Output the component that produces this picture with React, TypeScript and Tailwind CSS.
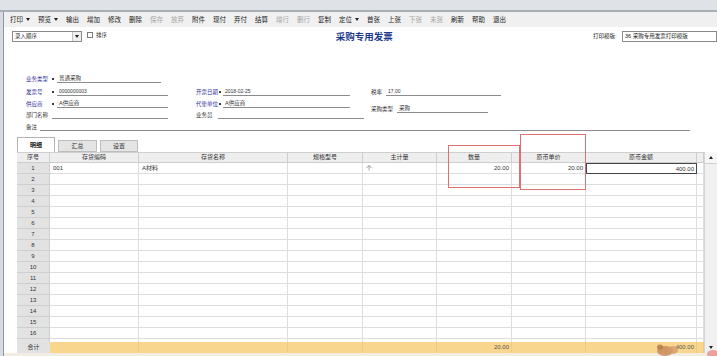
import React from 'react'

const tools: { t: string; off?: boolean; dd?: boolean }[] = [
  { t: '打印', dd: true },
  { t: '预览', dd: true },
  { t: '输出' },
  { t: '增加' },
  { t: '修改' },
  { t: '删除' },
  { t: '保存', off: true },
  { t: '放弃', off: true },
  { t: '附件' },
  { t: '现付' },
  { t: '弃付' },
  { t: '结算' },
  { t: '增行', off: true },
  { t: '删行', off: true },
  { t: '复制' },
  { t: '定位', dd: true },
  { t: '首张' },
  { t: '上张' },
  { t: '下张', off: true },
  { t: '末张', off: true },
  { t: '刷新' },
  { t: '帮助' },
  { t: '退出' },
]

const cols = ['序号', '存货编码', '存货名称', '规格型号', '主计量', '数量', '原币单价', '原币金额', '']
const row1 = ['1', '001', 'A材料', '', '个', '20.00', '20.00', '400.00', '']
const totals = ['合计', '', '', '', '', '20.00', '', '400.00', '']

const gridCols = 'grid grid-cols-[33px_89px_149px_75px_74px_75px_74px_111px_7px]'

function Caret({ up = false }: { up?: boolean }) {
  return (
    <svg width="4" height="3" viewBox="0 0 4 3" className="block">
      <polygon points={up ? '0,3 4,3 2,0' : '0,0 4,0 2,3'} fill="#222" />
    </svg>
  )
}

interface FieldProps {
  label: string
  lw: string
  lineW: string
  value?: string
  req?: boolean
  num?: boolean
  mark?: string
  className?: string
}

function Field({ label, lw, lineW, value = '', req, num, mark, className = '' }: FieldProps) {
  return (
    <div className={`flex items-end h-[9px] ${className}`}>
      <span
        className={`${lw} shrink-0 whitespace-nowrap text-[5.5px] leading-[8px] ${
          req ? 'text-[#34349c]' : 'text-[#333]'
        }`}
      >
        {label}
      </span>
      {mark && (
        <span className={`${mark} shrink-0 h-[8px] flex items-center`}>
          <span className="block w-[2px] h-[2px] bg-[#3a3a3a]" />
        </span>
      )}
      <div
        className={`${lineW} shrink-0 h-[9px] border-b border-[#8c8c8c] pl-[2px] leading-[8px] whitespace-nowrap text-[#333] ${
          num ? 'text-[5px]' : 'text-[5.5px]'
        }`}
      >
        {value}
      </div>
    </div>
  )
}

function Cell({ v, c, focus }: { v: string; c: number; focus?: boolean }) {
  const align = c === 0 ? 'text-center' : c >= 5 && c <= 7 ? 'text-right pr-[2px]' : 'text-left pl-[3px]'
  const bg = c === 0 ? 'bg-[#e2e2e2] border-[#cfcfcf]' : 'border-[#dedede]'
  return (
    <div
      className={`h-[11px] text-[6px] leading-[10px] whitespace-nowrap overflow-hidden text-[#333] ${align} ${
        focus ? 'border border-[#444] bg-white' : `border-r border-b ${bg}`
      }`}
    >
      {v}
    </div>
  )
}

export default function App() {
  return (
    <div className="relative w-[717px] h-[356px] overflow-hidden bg-white font-['Liberation_Sans','Noto_Sans_CJK_SC',sans-serif] text-[#222]">
      {/* 窗口顶部 */}
      <div className="h-[10px] bg-[#dfe2e7]" />
      <div className="h-[2px] bg-[#a8aeb6]" />

      <div className="flex h-[344px]">
        <div className="w-[4px] bg-[#d7dbe1] border-r border-[#8e98a8]" />

        <div className="flex-1 flex flex-col min-w-0">
          {/* 工具栏 */}
          <div className="flex items-center h-[15px] bg-[#f0f0f0] pl-[6px] gap-[8px] text-[6.5px] leading-[8px]">
            {tools.map((b) => (
              <span key={b.t} className={`flex items-center ${b.off ? 'text-[#a5a5a5]' : 'text-[#1a1a1a]'}`}>
                <span>{b.t}</span>
                {b.dd && (
                  <span className="ml-[3px]">
                    <Caret />
                  </span>
                )}
              </span>
            ))}
          </div>

          {/* 标题行 */}
          <div className="flex items-start h-[19px] pt-[4px] pl-[8px]">
            <div className="w-[326px] flex items-start">
              <div className="w-[70px] h-[11px] border border-[#8a8a8a] flex bg-white">
                <span className="flex-1 pl-[2px] text-[5.5px] leading-[9px]">录入顺序</span>
                <span className="w-[9px] border-l border-[#c4c4c4] bg-[#efefef] flex items-center justify-center">
                  <Caret />
                </span>
              </div>
              <span className="ml-[5px] mt-[1px] w-[6px] h-[6px] border border-[#7b7b7b] bg-white" />
              <span className="ml-[3px] text-[5.5px] leading-[8px]">排序</span>
            </div>
            <div className="w-[259px] text-[9.5px] font-bold leading-[12px] text-[#1d3a8c]">采购专用发票</div>
            <div className="flex items-center">
              <span className="w-[29px] text-[5.5px] leading-[9px] whitespace-nowrap">打印模版:</span>
              <div className="w-[95px] h-[11px] border border-[#8a8a8a] pl-[2px] text-[5.5px] leading-[9px] whitespace-nowrap">
                36 采购专用发票打印模版
              </div>
            </div>
          </div>

          {/* 表头字段 */}
          <div className="mt-[28px] pl-[22px] flex flex-col">
            <div className="flex">
              <Field label="业务类型" lw="w-[26px]" mark="w-[5px]" lineW="w-[104px]" value="普通采购" req />
            </div>
            <div className="flex mt-[4px]">
              <div className="w-[170px]">
                <Field label="发票号" lw="w-[26px]" mark="w-[5px]" lineW="w-[111px]" value="0000000003" req num />
              </div>
              <div className="w-[175px]">
                <Field label="开票日期" lw="w-[23px]" mark="w-[4px]" lineW="w-[127px]" value="2018-02-25" req num />
              </div>
              <Field label="税率" lw="w-[15px]" lineW="w-[115px]" value="17.00" num />
            </div>
            <div className="flex items-start mt-[3px]">
              <div className="w-[170px]">
                <Field label="供应商" lw="w-[26px]" mark="w-[5px]" lineW="w-[111px]" value="A供应商" req />
              </div>
              <div className="w-[175px]">
                <Field label="代垫单位" lw="w-[23px]" mark="w-[4px]" lineW="w-[127px]" value="A供应商" req />
              </div>
              <Field label="采购类型" lw="w-[26px]" lineW="w-[91px]" value="采购" className="mt-[5px] mb-[-5px]" />
            </div>
            <div className="flex mt-[2px]">
              <div className="w-[170px]">
                <Field label="部门名称" lw="w-[26px]" lineW="w-[116px]" />
              </div>
              <Field label="业务员" lw="w-[22px]" lineW="w-[146px]" />
            </div>
            <div className="flex mt-[3px]">
              <Field label="备注" lw="w-[14px]" lineW="w-[650px]" />
            </div>
          </div>

          {/* 页签 */}
          <div className="mt-[6px] ml-[13px] h-[15px] flex items-end gap-[3px] text-[6px]">
            <div className="w-[38px] h-[15px] bg-white border border-b-0 border-[#b3b3b3] flex items-center justify-center font-bold leading-[8px]">
              明细
            </div>
            <div className="w-[39px] h-[12px] bg-[#e4e4e4] border border-[#bdbdbd] flex items-center justify-center leading-[8px] text-[#333]">
              汇总
            </div>
            <div className="w-[38px] h-[12px] bg-[#e4e4e4] border border-[#bdbdbd] flex items-center justify-center leading-[8px] text-[#333]">
              设置
            </div>
          </div>

          {/* 表体 */}
          <div className="flex ml-[13px] h-[201px]">
            <div className="w-[687px] flex flex-col">
              <div className={`${gridCols} h-[11px] bg-[#eeeeee] border-t border-[#cfcfcf]`}>
                {cols.map((h, c) => (
                  <div
                    key={c}
                    className="h-[10px] border-r border-b border-[#cdcdcd] text-center text-[6px] leading-[9px] text-[#333] whitespace-nowrap"
                  >
                    {h}
                  </div>
                ))}
              </div>
              <div className="h-[179px] overflow-hidden">
                {Array.from({ length: 17 }, (_, i) => (
                  <div key={i} className={`${gridCols} h-[11px]`}>
                    {cols.map((_, c) => (
                      <Cell
                        key={c}
                        c={c}
                        v={i === 0 ? row1[c] : c === 0 && i < 16 ? String(i + 1) : ''}
                        focus={i === 0 && c === 7}
                      />
                    ))}
                  </div>
                ))}
              </div>
              <div className={`${gridCols} h-[11px] bg-[#f8d68e]`}>
                {totals.map((v, c) => (
                  <div
                    key={c}
                    className={`h-[11px] text-[6px] leading-[11px] whitespace-nowrap ${
                      c === 0 ? 'bg-[#e2e2e2] text-center text-[#333]' : 'border-r border-[#efcb80] text-right pr-[2px] text-[#555]'
                    }`}
                  >
                    {v}
                  </div>
                ))}
              </div>
            </div>

            {/* 滚动条 */}
            <div className="w-[13px] flex flex-col bg-[#f1f1f1] border-l border-[#d5d5d5]">
              <div className="h-[12px] border-b border-[#cfcfcf] flex items-center justify-center bg-[#f7f7f7]">
                <Caret up />
              </div>
              <div className="flex-1" />
              <div className="h-[11px] flex items-center justify-center">
                <Caret />
              </div>
            </div>
          </div>
          <div className="h-[3px] bg-[#f1ede2]" />
        </div>
      </div>

      {/* 标注框 */}
      <div className="absolute left-[448px] top-[145px] w-[72px] h-[43px] border border-[#de7070]" />
      <div className="absolute left-[520px] top-[134px] w-[66px] h-[56px] border border-[#de7070]" />

      {/* 水印贴图 */}
      <svg className="absolute left-[655px] top-[342px]" width="62" height="14" viewBox="0 0 62 14">
        <ellipse cx="10" cy="9" rx="8" ry="5" fill="#c88a5c" opacity="0.85" />
        <ellipse cx="5" cy="5" rx="3" ry="2.5" fill="#b9774a" opacity="0.85" />
        <ellipse cx="18" cy="8" rx="5" ry="4" fill="#d39b6d" opacity="0.8" />
        <ellipse cx="58" cy="12" rx="6" ry="4" fill="#e98c8c" opacity="0.8" />
      </svg>
    </div>
  )
}
